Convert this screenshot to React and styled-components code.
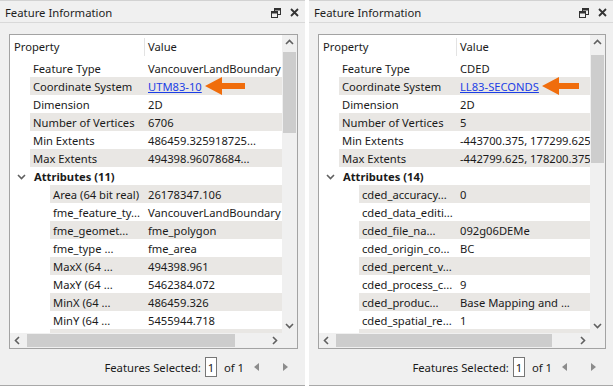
import styled, { createGlobalStyle } from 'styled-components';

const GlobalStyle = createGlobalStyle`
  body {
    margin: 0;
    background: #fff;
    font-family: "Noto Sans", "Liberation Sans", sans-serif;
  }
`;

const Page = styled.div`
  display: flex;
  gap: 4px;
  width: 613px;
  height: 389px;
`;

const Panel = styled.div`
  width: ${(p) => p.$width}px;
  height: 386px;
  background: #f0f0f0;
  border-bottom: 1px solid #a8a8a8;
  box-sizing: border-box;
  display: flex;
  flex-direction: column;
`;

const TitleBar = styled.div`
  height: 23px;
  box-sizing: border-box;
  border-top: 1px solid #d2d2d2;
  border-bottom: 1px solid #d9d9d9;
  padding: 2px 6px 0 5px;
  display: flex;
  align-items: center;
  font-size: 11.3px;
  color: #1e1e1e;
`;

const Title = styled.span`
  flex: 1;
`;

const TitleIcons = styled.div`
  display: flex;
  align-items: center;
  gap: 9px;
`;

const ListBox = styled.div`
  margin: 11px 7px 0 9px;
  height: 315px;
  box-sizing: border-box;
  border: 1px solid #a3a3a3;
  background: #fff;
  display: grid;
  grid-template-columns: 1fr 15px;
  grid-template-rows: 1fr 15px;
  overflow: hidden;
`;

const Content = styled.div`
  overflow: hidden;
  font-size: 11.2px;
  color: #1a1a1a;
`;

const Header = styled.div`
  height: 24px;
  display: flex;
  align-items: center;
`;

const HeaderCell = styled.div`
  width: ${(p) => (p.$width ? `${p.$width}px` : 'auto')};
  flex: ${(p) => (p.$width ? 'none' : '1')};
  padding-left: ${(p) => p.$pad}px;
  box-sizing: border-box;
  height: 18px;
  line-height: 18px;
  border-right: ${(p) => (p.$width ? '1px solid #e3e3e3' : 'none')};
`;

const Row = styled.div`
  height: 18px;
  display: flex;
  white-space: nowrap;
`;

const Indent = styled.div`
  width: ${(p) => p.$width}px;
  flex: none;
`;

const Shade = styled.div`
  flex: 1;
  display: flex;
  align-items: center;
  background: ${(p) => (p.$on ? '#e9e7e4' : 'transparent')};
  min-width: 0;
`;

const NameCell = styled.div`
  width: ${(p) => p.$width}px;
  flex: none;
  padding-left: 3px;
  box-sizing: border-box;
  overflow: hidden;
`;

const ValueCell = styled.div`
  flex: 1;
  padding-left: 3px;
  overflow: hidden;
  display: flex;
  align-items: center;
`;

const Link = styled.span`
  color: #1b3ee6;
  text-decoration: underline;
`;

const GroupRow = styled.div`
  height: 18px;
  display: flex;
  align-items: center;
  font-weight: 700;
  padding-left: 7px;
  gap: 8px;
`;

const VScroll = styled.div`
  background: #f0f0f0;
  display: flex;
  flex-direction: column;
`;

const HScroll = styled.div`
  background: #f0f0f0;
  display: flex;
  align-items: center;
`;

const Corner = styled.div`
  background: #f0f0f0;
`;

const ArrowButton = styled.div`
  width: 15px;
  height: 15px;
  flex: none;
  display: flex;
  align-items: center;
  justify-content: center;
`;

const VTrack = styled.div`
  flex: 1;
  padding: ${(p) => p.$top}px 1px 0;
`;

const VThumb = styled.div`
  height: ${(p) => p.$size}px;
  background: #cdcdcd;
`;

const HTrack = styled.div`
  flex: 1;
  height: 13px;
  padding-left: 2px;
`;

const HThumb = styled.div`
  width: ${(p) => p.$size}px;
  height: 13px;
  background: #cdcdcd;
`;

const Footer = styled.div`
  flex: 1;
  display: flex;
  align-items: center;
  justify-content: flex-end;
  padding-right: 17px;
  font-size: 11.3px;
  color: #1a1a1a;
`;

const PageBox = styled.span`
  width: 12px;
  height: 20px;
  box-sizing: border-box;
  border: 1px solid #767676;
  background: #fff;
  display: flex;
  align-items: center;
  justify-content: center;
  margin: 0 7px 0 4px;
`;

const Pager = styled.div`
  display: flex;
  align-items: center;
  gap: 24px;
  margin-left: 10px;
`;

const Caret = ({ dir }) => {
  const pts = {
    up: '1,6 4.5,2.5 8,6',
    down: '1,3 4.5,6.5 8,3',
    left: '6,1 2.5,4.5 6,8',
    right: '3,1 6.5,4.5 3,8',
  }[dir];
  return (
    <svg width="9" height="9" viewBox="0 0 9 9">
      <polyline points={pts} fill="none" stroke="#606060" strokeWidth="1.6" />
    </svg>
  );
};

const FloatIcon = () => (
  <svg width="10" height="10" viewBox="0 0 10 10">
    <rect x="3.5" y="0.5" width="6" height="6" fill="none" stroke="#333" />
    <rect x="3.5" y="0.5" width="6" height="2" fill="#333" />
    <rect x="0.5" y="3.5" width="6" height="6" fill="#f0f0f0" stroke="#333" />
    <rect x="0.5" y="3.5" width="6" height="2" fill="#333" />
  </svg>
);

const CloseIcon = () => (
  <svg width="9" height="9" viewBox="0 0 9 9">
    <path d="M1 1 L8 8 M8 1 L1 8" stroke="#333" strokeWidth="1.8" />
  </svg>
);

const OrangeArrow = ({ length }) => (
  <svg width={length} height="18" viewBox={`0 0 ${length} 18`} style={{ marginLeft: 3, flex: 'none' }}>
    <polygon
      points={`0,9 17,0 17,6 ${length},6 ${length},12 17,12 17,18`}
      fill="#f06d0c"
    />
  </svg>
);

const Tri = ({ dir }) => (
  <svg width="5" height="8" viewBox="0 0 5 8">
    <polygon points={dir === 'left' ? '5,0 0,4 5,8' : '0,0 5,4 0,8'} fill="#8c8c8c" />
  </svg>
);

const panels = [
  {
    width: 305,
    col: 135,
    arrow: 40,
    thumbTop: 2,
    thumbSize: 81,
    hThumb: 208,
    props: [
      ['Feature Type', 'VancouverLandBoundary'],
      ['Coordinate System', 'UTM83-10', true],
      ['Dimension', '2D'],
      ['Number of Vertices', '6706'],
      ['Min Extents', '486459.325918725...'],
      ['Max Extents', '494398.96078684...'],
    ],
    group: 'Attributes (11)',
    attrs: [
      ['Area (64 bit real)', '26178347.106'],
      ['fme_feature_ty...', 'VancouverLandBoundary'],
      ['fme_geomet...', 'fme_polygon'],
      ['fme_type ...', 'fme_area'],
      ['MaxX (64 ...', '494398.961'],
      ['MaxY (64 ...', '5462384.072'],
      ['MinX (64 ...', '486459.326'],
      ['MinY (64 ...', '5455944.718'],
      ['', ''],
    ],
  },
  {
    width: 304,
    col: 138,
    arrow: 37,
    thumbTop: 5,
    thumbSize: 108,
    hThumb: 216,
    props: [
      ['Feature Type', 'CDED'],
      ['Coordinate System', 'LL83-SECONDS', true],
      ['Dimension', '2D'],
      ['Number of Vertices', '5'],
      ['Min Extents', '-443700.375, 177299.625'],
      ['Max Extents', '-442799.625, 178200.375'],
    ],
    group: 'Attributes (14)',
    attrs: [
      ['cded_accuracy...', '0'],
      ['cded_data_editi...', ''],
      ['cded_file_na...', '092g06DEMe'],
      ['cded_origin_co...', 'BC'],
      ['cded_percent_v...', ''],
      ['cded_process_c...', '9'],
      ['cded_produc...', 'Base Mapping and ...'],
      ['cded_spatial_re...', '1'],
      ['', ''],
    ],
  },
];

function PropRow({ name, value, link, indent, col, shaded, arrow }) {
  return (
    <Row>
      <Indent $width={indent} />
      <Shade $on={shaded}>
        <NameCell $width={col - indent}>{name}</NameCell>
        <ValueCell>
          {link ? (
            <>
              <Link>{value}</Link>
              <OrangeArrow length={arrow} />
            </>
          ) : (
            value
          )}
        </ValueCell>
      </Shade>
    </Row>
  );
}

function InfoPanel({ data }) {
  const offset = data.props.length + 1;
  return (
    <Panel $width={data.width}>
      <TitleBar>
        <Title>Feature Information</Title>
        <TitleIcons>
          <FloatIcon />
          <CloseIcon />
        </TitleIcons>
      </TitleBar>
      <ListBox>
        <Content>
          <Header>
            <HeaderCell $width={data.col} $pad={4}>Property</HeaderCell>
            <HeaderCell $pad={3}>Value</HeaderCell>
          </Header>
          {data.props.map(([name, value, link], i) => (
            <PropRow
              key={name}
              name={name}
              value={value}
              link={link}
              indent={20}
              col={data.col}
              shaded={i % 2 === 1}
              arrow={data.arrow}
            />
          ))}
          <GroupRow>
            <Caret dir="down" />
            <span>{data.group}</span>
          </GroupRow>
          {data.attrs.map(([name, value], i) => (
            <PropRow
              key={i}
              name={name}
              value={value}
              indent={40}
              col={data.col}
              shaded={(offset + i) % 2 === 1}
            />
          ))}
        </Content>
        <VScroll>
          <ArrowButton>
            <Caret dir="up" />
          </ArrowButton>
          <VTrack $top={data.thumbTop}>
            <VThumb $size={data.thumbSize} />
          </VTrack>
          <ArrowButton>
            <Caret dir="down" />
          </ArrowButton>
        </VScroll>
        <HScroll>
          <ArrowButton>
            <Caret dir="left" />
          </ArrowButton>
          <HTrack>
            <HThumb $size={data.hThumb} />
          </HTrack>
          <ArrowButton>
            <Caret dir="right" />
          </ArrowButton>
        </HScroll>
        <Corner />
      </ListBox>
      <Footer>
        Features Selected:
        <PageBox>1</PageBox>
        of 1
        <Pager>
          <Tri dir="left" />
          <Tri dir="right" />
        </Pager>
      </Footer>
    </Panel>
  );
}

export default function App() {
  return (
    <>
      <GlobalStyle />
      <Page>
        {panels.map((p) => (
          <InfoPanel key={p.group} data={p} />
        ))}
      </Page>
    </>
  );
}
